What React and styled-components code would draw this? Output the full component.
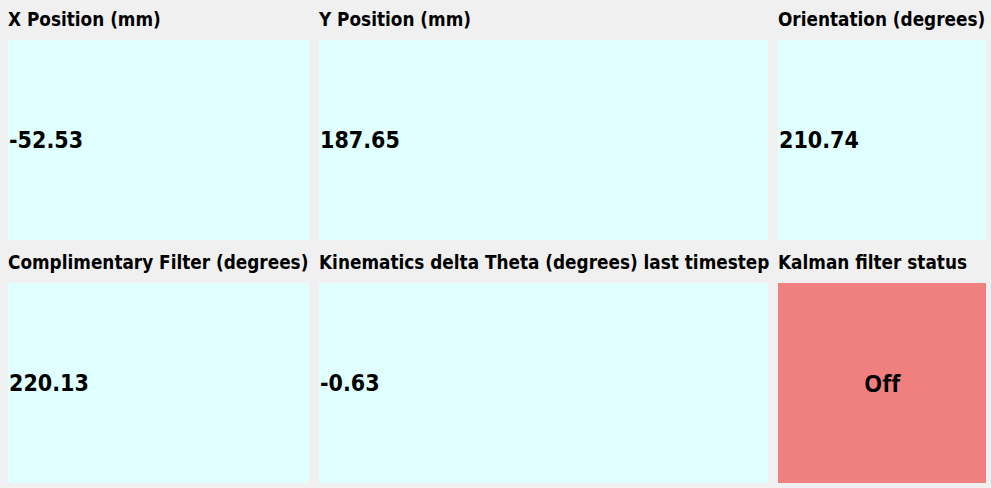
import React from 'react';
import styled, { createGlobalStyle } from 'styled-components';

const GlobalStyle = createGlobalStyle`
  html, body {
    margin: 0;
    padding: 0;
    background: #f0f0f0;
  }
  body {
    font-family: 'DejaVu Sans Condensed', 'DejaVu Sans', Verdana, sans-serif;
    font-stretch: condensed;
  }
`;

const readings = [
  { label: 'X Position (mm)', value: '-52.53' },
  { label: 'Y Position (mm)', value: '187.65' },
  { label: 'Orientation (degrees)', value: '210.74' },
  { label: 'Complimentary Filter (degrees)', value: '220.13' },
  { label: 'Kinematics delta Theta (degrees) last timestep', value: '-0.63' },
  { label: 'Kalman filter status', value: 'Off', status: true },
];

export default function App() {
  return (
    <>
      <GlobalStyle />
      <Board>
        {readings.map((r) => (
          <Cell key={r.label}>
            <Label>{r.label}</Label>
            <Panel $status={r.status}>
              <Value $status={r.status}>{r.value}</Value>
            </Panel>
          </Cell>
        ))}
      </Board>
    </>
  );
}

/* Styled Components */
const Board = styled.div`
  display: grid;
  grid-template-columns: 301px 449px 208px;
  column-gap: 10px;
  row-gap: 3px;
  padding-left: 8px;
  width: 991px;
  height: 488px;
  box-sizing: border-box;
  align-content: start;
`;

const Cell = styled.div`
  display: flex;
  flex-direction: column;
`;

const Label = styled.div`
  height: 40px;
  box-sizing: border-box;
  padding-top: 9px;
  line-height: 22px;
  font-size: 18.8px;
  font-weight: bold;
  color: #000;
  white-space: nowrap;
`;

const Panel = styled.div`
  height: 200px;
  display: flex;
  align-items: center;
  justify-content: ${(p) => (p.$status ? 'center' : 'flex-start')};
  background: ${(p) => (p.$status ? '#f08080' : '#e0ffff')};
  padding-left: ${(p) => (p.$status ? '0' : '1px')};
`;

const Value = styled.span`
  font-family: ${(p) => (p.$status ? "'Open Sans', sans-serif" : "'DejaVu Sans Condensed', 'DejaVu Sans', sans-serif")};
  font-stretch: ${(p) => (p.$status ? 'normal' : 'condensed')};
  font-size: 23px;
  font-weight: bold;
  color: #000;
`;
